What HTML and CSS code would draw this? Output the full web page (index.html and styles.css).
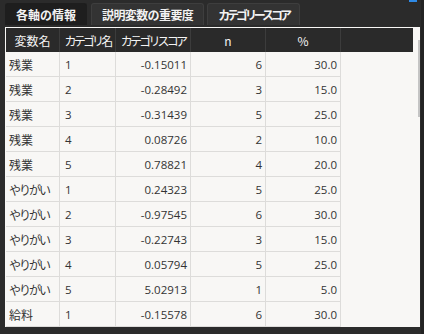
FILE: index.html
```html
<!DOCTYPE html>
<html lang="ja">
<head>
<meta charset="utf-8">
<link rel="stylesheet" href="styles.css">
</head>
<body>
<div class="app">
  <div class="topmark"></div>
  <div class="tabs">
    <div class="tab active">各軸の情報</div>
    <div class="tab tight">説明変数の重要度</div>
    <div class="tab kana">カテゴリースコア</div>
  </div>
  <div class="panel">
    <div class="thead">
      <div class="th">変数名</div>
      <div class="th kana">カテゴリ名</div>
      <div class="th kana">カテゴリスコア</div>
      <div class="th">n</div>
      <div class="th">%</div>
      <div class="th filler"></div>
    </div>
    <div class="tbody">
      <div class="row"><div class="td cjk">残業</div><div class="td">1</div><div class="td num">-0.15011</div><div class="td num">6</div><div class="td num">30.0</div></div>
      <div class="row"><div class="td cjk">残業</div><div class="td">2</div><div class="td num">-0.28492</div><div class="td num">3</div><div class="td num">15.0</div></div>
      <div class="row"><div class="td cjk">残業</div><div class="td">3</div><div class="td num">-0.31439</div><div class="td num">5</div><div class="td num">25.0</div></div>
      <div class="row"><div class="td cjk">残業</div><div class="td">4</div><div class="td num">0.08726</div><div class="td num">2</div><div class="td num">10.0</div></div>
      <div class="row"><div class="td cjk">残業</div><div class="td">5</div><div class="td num">0.78821</div><div class="td num">4</div><div class="td num">20.0</div></div>
      <div class="row"><div class="td cjk kana">やりがい</div><div class="td">1</div><div class="td num">0.24323</div><div class="td num">5</div><div class="td num">25.0</div></div>
      <div class="row"><div class="td cjk kana">やりがい</div><div class="td">2</div><div class="td num">-0.97545</div><div class="td num">6</div><div class="td num">30.0</div></div>
      <div class="row"><div class="td cjk kana">やりがい</div><div class="td">3</div><div class="td num">-0.22743</div><div class="td num">3</div><div class="td num">15.0</div></div>
      <div class="row"><div class="td cjk kana">やりがい</div><div class="td">4</div><div class="td num">0.05794</div><div class="td num">5</div><div class="td num">25.0</div></div>
      <div class="row"><div class="td cjk kana">やりがい</div><div class="td">5</div><div class="td num">5.02913</div><div class="td num">1</div><div class="td num">5.0</div></div>
      <div class="row"><div class="td cjk">給料</div><div class="td">1</div><div class="td num">-0.15578</div><div class="td num">6</div><div class="td num">30.0</div></div>
    </div>
    <div class="thumb"></div>
  </div>
</div>
</body>
</html>
```
FILE: styles.css
```css
html, body {
  margin: 0;
  padding: 0;
  background: #2b2b2b;
}
body {
  width: 424px;
  height: 334px;
  overflow: hidden;
  font-family: "Open Sans", "Noto Sans CJK JP", sans-serif;
}
.app {
  position: relative;
  width: 424px;
  height: 334px;
  background: linear-gradient(to right, #2b2b2b 421px, #232323 421px);
}
.topmark {
  position: absolute;
  left: 409px;
  top: 0;
  width: 8px;
  height: 2px;
  background: #2f8ae6;
}
.tabs {
  display: flex;
  padding: 3px 0 0 5px;
  gap: 4px;
  height: 22px;
}
.tab {
  height: 22px;
  box-sizing: border-box;
  padding: 0 10px;
  display: flex;
  align-items: center;
  white-space: nowrap;
  font-family: "Noto Sans CJK JP", sans-serif;
  font-size: 12px;
  font-weight: 700;
  color: #f2f2f2;
  background: #333333;
  border: 1px solid #3e3e3e;
  border-bottom: none;
  border-radius: 3px 3px 0 0;
}
.tab.active {
  background: #1e1e1e;
  border-color: #1e1e1e;
}
.tab.tight {
  letter-spacing: -0.6px;
}
.tab.kana {
  letter-spacing: -3.1px;
  margin-left: -1px;
}
.panel {
  position: relative;
  margin: 2px 0 0 5px;
  width: 415px;
  height: 300px;
  box-sizing: border-box;
  padding: 1px 0 0 1px;
  background: #f8f7f5;
  overflow: hidden;
}
.thead {
  display: grid;
  grid-template-columns: 54px 56px 75px 75px 75px 1fr;
  width: 407px;
  height: 24px;
  background: #2a2a2a;
}
.th {
  display: flex;
  align-items: center;
  justify-content: center;
  white-space: nowrap;
  color: #f4f4f4;
  font-family: "Noto Sans CJK JP", sans-serif;
  font-size: 12px;
  border-right: 1px solid #3c3c3c;
}
.th.kana {
  letter-spacing: -2.8px;
}
.th.filler {
  border-right: none;
}
.row {
  display: grid;
  grid-template-columns: 54px 56px 75px 75px 75px;
  width: 335px;
  height: 25px;
  box-sizing: border-box;
  border-bottom: 1px solid #dddcda;
}
.td {
  display: flex;
  align-items: center;
  padding: 0 3px;
  white-space: nowrap;
  font-size: 11.5px;
  color: #333333;
  border-right: 1px solid #dddcda;
}
.td.cjk {
  font-family: "Noto Sans CJK JP", sans-serif;
  font-size: 12px;
  padding-left: 3px;
}
.td.kana {
  letter-spacing: -2px;
}
.td:nth-child(2) {
  padding-left: 5px;
}
.td.num {
  justify-content: flex-end;
}
.thumb {
  position: absolute;
  left: 413px;
  top: 13px;
  width: 2px;
  height: 77px;
  background: #c4c4c4;
}
```
